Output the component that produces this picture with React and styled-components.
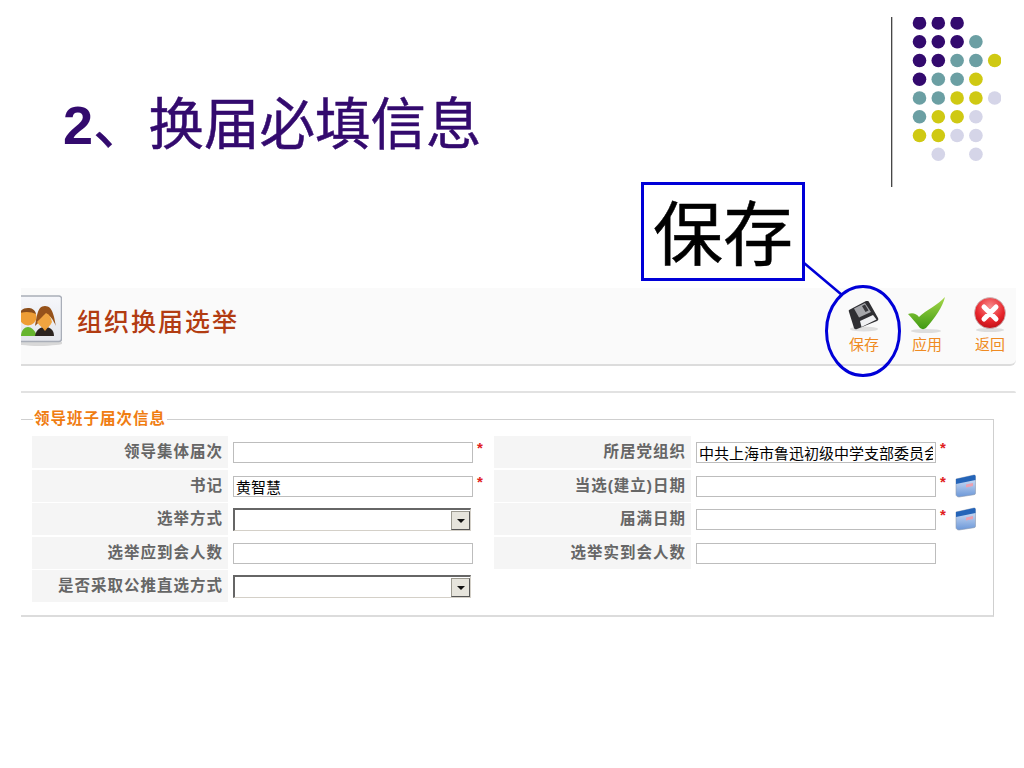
import React from "react"
import styled, { createGlobalStyle } from "styled-components"

const PURPLE = "#330a6e"
const TEAL = "#6b9fa3"
const LIME = "#cfc913"
const LILAC = "#d5d5e8"

// one line per row of the corner pattern, "." leaves a gap
const DOT_ROWS = ["PPP..", "PPPT.", "PPTTL", "PTTL.", "TTLLD", "TLLD.", "LLDD.", ".D.D."]
const DOT_COLORS = { P: PURPLE, T: TEAL, L: LIME, D: LILAC }

const leftRows = [
  { label: "领导集体届次", required: true },
  { label: "书记", value: "黄智慧", required: true },
  { label: "选举方式", select: true },
  { label: "选举应到会人数" },
  { label: "是否采取公推直选方式", select: true },
]

const rightRows = [
  { label: "所居党组织", value: "中共上海市鲁迅初级中学支部委员会", required: true },
  { label: "当选(建立)日期", required: true, calendar: true },
  { label: "届满日期", required: true, calendar: true },
  { label: "选举实到会人数" },
  null,
]

const CornerPattern = () => (
  <svg width="110" height="172" viewBox="0 0 110 172">
    <line x1="0.7" y1="0" x2="0.7" y2="170" stroke="#333" strokeWidth="1.2" />
    {DOT_ROWS.map((row, r) =>
      row.split("").map((c, i) =>
        c === "." ? null : (
          <circle key={`${r}-${i}`} cx={28.5 + i * 18.8} cy={6 + r * 18.75} r="6.8" fill={DOT_COLORS[c]} />
        )
      )
    )}
  </svg>
)

const PeopleIcon = () => (
  <svg width="41" height="52" viewBox="0 0 41 52">
    <defs>
      <linearGradient id="frame" x1="0" y1="0" x2="0" y2="1">
        <stop offset="0" stopColor="#f6f7fb" />
        <stop offset="1" stopColor="#e3e5ec" />
      </linearGradient>
    </defs>
    <ellipse cx="18" cy="48" rx="24" ry="3" fill="#d8d8d8" />
    <path d="M-4 1H38a2.500 2.500 0 0 1 2.500 2.500V44a2.500 2.500 0 0 1-2.500 2.500H-4z" fill="url(#frame)" stroke="#a9aeb8" strokeWidth="1.500" />
    <path d="M0 41c0-6 4-9 7-9s7 3 9 9z" fill="#66b52f" />
    <circle cx="7" cy="22" r="8.500" fill="#ee9d36" />
    <path d="M-1 18c1-4 5-5 8-5s7 1 8 6c-4-2-10-3-16-1z" fill="#8a4d1c" />
    <path d="M14 41c1-6 5-9 10-9s9 3 9 9z" fill="#2b2320" />
    <path d="M20 31l4 5 4-5z" fill="#ee9d36" />
    <path d="M14 31c2-9 2-20 10-20s9 11 11 20c-3-6-5-10-10-12-3 3-6 8-11 12z" fill="#96521b" />
    <path d="M16 27c2-2 5-5 9-9 3 1 5 4 6 9-2 4-4 6-7 6s-6-3-8-6z" fill="#f0a440" />
  </svg>
)

const SaveIcon = () => (
  <svg width="34" height="34" viewBox="0 2 34 34">
    <ellipse cx="17" cy="30" rx="14" ry="2.500" fill="#dedede" />
    <path d="M2 11L19 2q2-1 3 1l9 16q1 2-1 3L10 30q-2 1-3-1L2 13q-.5-1.500 0-2z" fill="#2f2f33" />
    <path d="M7 9.500L18 4l6 9-12 5.500z" fill="#a5a6aa" />
    <path d="M15 7l3-1.500 3.500 6-3 1.500z" fill="#37373b" />
    <path d="M13 22l13-6 3.500 4.500L14.500 28z" fill="#f0f1f3" />
  </svg>
)

const ApplyIcon = () => (
  <svg width="38" height="40" viewBox="0 -2 38 40">
    <defs>
      <linearGradient id="tick" x1="0" y1="0" x2="0" y2="1">
        <stop offset="0" stopColor="#a6d84a" />
        <stop offset="1" stopColor="#3f9a12" />
      </linearGradient>
    </defs>
    <ellipse cx="18" cy="34" rx="15" ry="2" fill="#ddd" />
    <path d="M0 17c4-1.500 8-1 11 3C18 13 30 8 37 0c-2 9-10 21-19 31-2 1.500-4 1.500-6 0C8 26 4 21 0 17z" fill="url(#tick)" />
  </svg>
)

const BackIcon = () => (
  <svg width="34" height="38" viewBox="0 2 34 38">
    <defs>
      <radialGradient id="ball" cx="0.5" cy="0.3" r="0.75">
        <stop offset="0" stopColor="#f78d8d" />
        <stop offset="0.6" stopColor="#e8262c" />
        <stop offset="1" stopColor="#b90c14" />
      </radialGradient>
    </defs>
    <ellipse cx="17" cy="35" rx="14" ry="2" fill="#ddd" />
    <circle cx="17" cy="18" r="15.500" fill="url(#ball)" stroke="#c4c4c4" strokeWidth="0.800" />
    <path d="M11 12l6 6m0 0l6-6m-6 6l6 6m-6-6l-6 6" stroke="#fff" strokeWidth="5" strokeLinecap="round" />
  </svg>
)

const CalendarIcon = () => (
  <svg width="22" height="24" viewBox="0 0 22 24">
    <defs>
      <linearGradient id="cal" x1="0" y1="0" x2="0" y2="1">
        <stop offset="0" stopColor="#dfeafa" />
        <stop offset="1" stopColor="#6b97d8" />
      </linearGradient>
    </defs>
    <path d="M1 5L19 1c1 0 1.500.5 1.500 1.500V19c0 1-.5 1.500-1.500 1.700L4 23c-1.500 0-3-1-3-2.500z" fill="url(#cal)" stroke="#8d9bb0" strokeWidth="0.600" />
    <path d="M1 5L19 1c1 0 1.500.5 1.500 1.500V6L1 10z" fill="#2464b8" />
    <path d="M11 10.500l7-1.500v3l-7 1.500z" fill="#eba0b0" />
  </svg>
)

const Field = ({ row }) => (
  <FieldCell>
    {row.select ? (
      <SelectBox>
        <SelectArrow />
      </SelectBox>
    ) : (
      <TextInput readOnly value={row.value || ""} />
    )}
    {row.required && <Star>*</Star>}
    {row.calendar && <CalendarSlot><CalendarIcon /></CalendarSlot>}
  </FieldCell>
)

export default function App() {
  return (
    <Slide>
      <GlobalStyle />
      <SlideHeader>
        <SlideTitle><b>2</b>、换届必填信息</SlideTitle>
        <CornerPattern />
      </SlideHeader>

      <Shot>
        <Toolbar>
          <ToolbarTitle>
            <PeopleIcon />
            <h1>组织换届选举</h1>
          </ToolbarTitle>
          <ToolButtons>
            <ToolButton><SaveIcon /><span>保存</span></ToolButton>
            <ToolButton><ApplyIcon /><span>应用</span></ToolButton>
            <ToolButton><BackIcon /><span>返回</span></ToolButton>
          </ToolButtons>
        </Toolbar>
        <TopRule />
        <Section>
          <SectionLegend>领导班子届次信息</SectionLegend>
          <FormGrid>
            {leftRows.map((row, i) => (
              <React.Fragment key={row.label}>
                <Label>{row.label}</Label>
                <Field row={row} />
                {rightRows[i] ? <Label>{rightRows[i].label}</Label> : <span />}
                {rightRows[i] ? <Field row={rightRows[i]} /> : <span />}
              </React.Fragment>
            ))}
          </FormGrid>
        </Section>
      </Shot>

      <CalloutBox>保存</CalloutBox>
      <CalloutMark width="110" height="120" viewBox="0 0 110 120">
        <line x1="4" y1="3" x2="42" y2="35" stroke="#0000d8" strokeWidth="2.500" />
        <ellipse cx="63" cy="71" rx="36.500" ry="44.500" fill="none" stroke="#0000d8" strokeWidth="3" />
      </CalloutMark>
    </Slide>
  )
}

const GlobalStyle = createGlobalStyle`
  html, body {
    margin: 0;
    background: #fff;
  }
  * {
    box-sizing: border-box;
  }
`

const Slide = styled.div`
  position: relative;
  width: 1024px;
  height: 768px;
  overflow: hidden;
  font-family: "Liberation Sans", "Noto Sans CJK SC", sans-serif;
`

const SlideHeader = styled.header`
  display: flex;
  justify-content: space-between;
  align-items: flex-start;
  height: 288px;
  padding: 17px 23px 0 63px;
`

const SlideTitle = styled.div`
  margin-top: 75px;
  font-family: "Liberation Serif", "Noto Sans CJK SC", serif;
  font-size: 55.500px;
  line-height: 66px;
  color: ${PURPLE};
  -webkit-text-stroke: 0.500px ${PURPLE};

  b {
    font-family: "Liberation Sans", sans-serif;
    font-size: 54px;
    -webkit-text-stroke: 0;
  }
`

const CalloutBox = styled.div`
  position: absolute;
  left: 641px;
  top: 182px;
  width: 164px;
  height: 99px;
  border: 3px solid #0000d8;
  background: #fff;
  color: #000;
  font-size: 70px;
  line-height: 90px;
  text-align: center;
  font-family: "Noto Sans CJK SC", sans-serif;
  -webkit-text-stroke: 0.500px #000;
`

const CalloutMark = styled.svg`
  position: absolute;
  left: 800px;
  top: 260px;
`

const Shot = styled.main`
  margin-left: 21px;
  width: 995px;
`

const Toolbar = styled.div`
  display: flex;
  justify-content: space-between;
  height: 78px;
  background: #fafafa;
  border-bottom: 2px solid #dcdcdc;
  border-radius: 0 0 6px 0;
  padding-top: 7px;
`

const ToolbarTitle = styled.div`
  display: flex;
  align-items: flex-start;
  gap: 15px;

  h1 {
    margin: 7px 0 0;
    font-size: 25px;
    line-height: 36px;
    letter-spacing: 2px;
    font-weight: 500;
    color: #b23c12;
    font-family: "Noto Sans CJK SC", sans-serif;
  }
`

const ToolButtons = styled.div`
  display: flex;
  gap: 11px;
`

const ToolButton = styled.div`
  display: flex;
  flex-direction: column;
  align-items: center;
  justify-content: flex-end;
  width: 52px;
  height: 60px;

  span {
    font-size: 15px;
    line-height: 20px;
    color: #ef8a22;
  }
`

const TopRule = styled.div`
  height: 2px;
  margin-top: 25px;
  background: #e2e2e2;
  border-radius: 0 4px 0 0;
`

const Section = styled.fieldset`
  margin: 18px 22px 0 0;
  padding: 9px 0 12px 11px;
  height: 206px;
  border: 1px solid #cfcfcf;
  border-bottom: 2px solid #dcdcdc;
  border-left: 0;
`

const SectionLegend = styled.legend`
  margin-left: 1px;
  padding: 0 1px;
  font-size: 15.500px;
  line-height: 16px;
  letter-spacing: 1px;
  font-weight: 700;
  color: #f07d12;
`

const FormGrid = styled.div`
  display: grid;
  grid-template-columns: 196px 266px 197px 1fr;
  grid-auto-rows: 32px;
  row-gap: 1.500px;
`

const Label = styled.div`
  display: flex;
  align-items: center;
  justify-content: flex-end;
  padding: 0 5px 4px 0;
  background: #f5f5f5;
  font-size: 15.500px;
  font-weight: 700;
  letter-spacing: 1px;
  color: #666;
  white-space: nowrap;
`

const FieldCell = styled.div`
  display: flex;
  align-items: flex-start;
  padding: 6px 0 0 5px;
`

const TextInput = styled.input`
  width: 240px;
  height: 21px;
  padding: 0 2px;
  flex: none;
  border: 1px solid #bdbdbd;
  outline: 0;
  background: #fff;
  color: #000;
  font-family: "Noto Sans CJK SC", sans-serif;
  font-size: 15px;
  line-height: 19px;
`

const SelectBox = styled.div`
  position: relative;
  flex: none;
  width: 238px;
  height: 23px;
  margin-top: -1px;
  background: #fff;
  border-style: solid;
  border-width: 2px 1px 1px 2px;
  border-color: #666 #d4d0c8 #d4d0c8 #666;
`

const SelectArrow = styled.span`
  position: absolute;
  right: 0;
  top: 1px;
  bottom: 0;
  width: 19px;
  background: #e6e4dc;
  border: 1px solid #9c9a90;
  border-right-color: #555;
  border-bottom-color: #555;

  &::after {
    content: "";
    position: absolute;
    left: 5px;
    top: 7px;
    border: 4px solid transparent;
    border-top: 4px solid #111;
    border-bottom: 0;
  }
`

const Star = styled.span`
  margin: -2px 0 0 4px;
  width: 10px;
  flex: none;
  color: #e02020;
  font-size: 15px;
  line-height: 15px;
  font-weight: 700;
`

const CalendarSlot = styled.span`
  margin: -2px 0 0 5px;
  line-height: 0;
`
